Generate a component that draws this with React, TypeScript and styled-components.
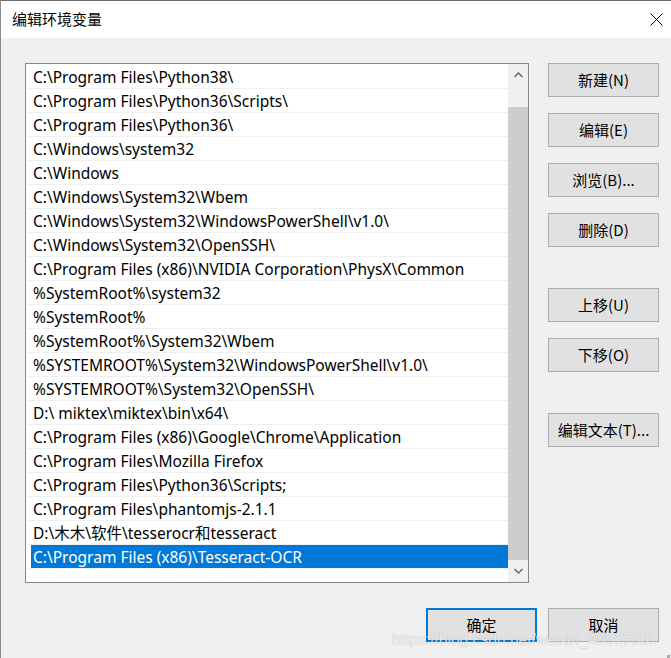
import styled, { createGlobalStyle } from "styled-components";

const GlobalStyle = createGlobalStyle`
  html, body {
    margin: 0;
    padding: 0;
    background: #f0f0f0;
  }
  * {
    box-sizing: border-box;
  }
`;

const paths = [
  "C:\\Program Files\\Python38\\",
  "C:\\Program Files\\Python36\\Scripts\\",
  "C:\\Program Files\\Python36\\",
  "C:\\Windows\\system32",
  "C:\\Windows",
  "C:\\Windows\\System32\\Wbem",
  "C:\\Windows\\System32\\WindowsPowerShell\\v1.0\\",
  "C:\\Windows\\System32\\OpenSSH\\",
  "C:\\Program Files (x86)\\NVIDIA Corporation\\PhysX\\Common",
  "%SystemRoot%\\system32",
  "%SystemRoot%",
  "%SystemRoot%\\System32\\Wbem",
  "%SYSTEMROOT%\\System32\\WindowsPowerShell\\v1.0\\",
  "%SYSTEMROOT%\\System32\\OpenSSH\\",
  "D:\\ miktex\\miktex\\bin\\x64\\",
  "C:\\Program Files (x86)\\Google\\Chrome\\Application",
  "C:\\Program Files\\Mozilla Firefox",
  "C:\\Program Files\\Python36\\Scripts;",
  "C:\\Program Files\\phantomjs-2.1.1",
  "D:\\木木\\软件\\tesserocr和tesseract",
  "C:\\Program Files (x86)\\Tesseract-OCR",
];

const buttonGroups = [
  ["新建(N)", "编辑(E)", "浏览(B)...", "删除(D)"],
  ["上移(U)", "下移(O)"],
  ["编辑文本(T)..."],
];

const Window = styled.div`
  position: relative;
  width: 671px;
  height: 658px;
  overflow: hidden;
  background: #f0f0f0;
  border-left: 1px solid #8a8a8a;
  font-family: "Noto Sans CJK SC", "Noto Sans", sans-serif;
  color: #000;
`;

const TitleBar = styled.div`
  height: 38px;
  background: #fff;
  border-top: 1px solid #6a6a6a;
  display: flex;
  align-items: center;
  justify-content: space-between;
  padding: 0 8px 0 11px;
`;

const Title = styled.span`
  font-size: 15px;
  line-height: 20px;
  margin-top: -1px;
`;

const CloseIcon = styled.svg`
  width: 13px;
  height: 13px;
  margin-bottom: 1px;
`;

const Body = styled.div`
  padding: 25px 12px 0 24px;
`;

const Main = styled.div`
  display: flex;
  gap: 19px;
`;

const ListBox = styled.div`
  width: 504px;
  height: 520px;
  border: 1px solid #828790;
  background: #fff;
  display: flex;
`;

const Rows = styled.div`
  flex: 1;
  padding-top: 1px;
  overflow: hidden;
`;

const Row = styled.div`
  height: 24px;
  margin-left: 1px;
  padding-left: 4px;
  border-bottom: 1px solid #f0f0f0;
  display: flex;
`;

const Label = styled.span<{ $selected?: boolean }>`
  flex: 1;
  padding: 1px 0 0 2px;
  font-family: "Noto Sans", "Noto Sans CJK SC", sans-serif;
  font-size: 15.5px;
  line-height: 22px;
  white-space: nowrap;
  background: ${(p) => (p.$selected ? "#0078d7" : "transparent")};
  color: ${(p) => (p.$selected ? "#fff" : "#000")};
`;

const ScrollBar = styled.div`
  width: 20px;
  background: #f0f0f0;
  display: flex;
  flex-direction: column;
`;

const ArrowBox = styled.div<{ $height: number }>`
  height: ${(p) => p.$height}px;
  flex: ${(p) => (p.$height ? "none" : "1")};
  display: flex;
  align-items: center;
  justify-content: center;
`;

const Thumb = styled.div`
  margin-top: 21px;
  height: 453px;
  background: #cdcdcd;
`;

const ButtonColumn = styled.div`
  width: 111px;
  display: flex;
  flex-direction: column;
  gap: 41px;
`;

const ButtonGroup = styled.div`
  display: flex;
  flex-direction: column;
  gap: 16px;
`;

const Button = styled.button<{ $primary?: boolean }>`
  width: 111px;
  height: 34px;
  padding: 0;
  background: #e1e1e1;
  border: ${(p) => (p.$primary ? "2px solid #0078d7" : "1px solid #adadad")};
  font-family: "Noto Sans CJK SC", "Noto Sans", sans-serif;
  font-size: 15px;
  line-height: 14px;
  color: #000;
`;

const Footer = styled.div`
  margin-top: 25px;
  display: flex;
  justify-content: flex-end;
  gap: 11px;
`;

const Watermark = styled.div`
  position: absolute;
  left: 391px;
  top: 633px;
  font-family: "Liberation Sans", Arial, sans-serif;
  font-size: 15.6px;
  line-height: 14px;
  color: rgba(255, 255, 255, 0.78);
  text-shadow: 0 0 1px rgba(0, 0, 0, 0.3);
  white-space: nowrap;
`;

const Grip = styled.div`
  position: absolute;
  right: 1px;
  bottom: 0;
  width: 3px;
  height: 3px;
  background: #a8a8a8;
`;

function Chevron({ up }: { up?: boolean }) {
  return (
    <svg width="9" height="6" viewBox="0 0 9 6">
      <polyline
        points={up ? "0.5,5 4.5,1 8.5,5" : "0.5,1 4.5,5 8.5,1"}
        fill="none"
        stroke="#606060"
        strokeWidth="1.3"
      />
    </svg>
  );
}

export default function App() {
  const selected = paths.length - 1;

  return (
    <>
      <GlobalStyle />
      <Window>
        <TitleBar>
          <Title>编辑环境变量</Title>
          <CloseIcon viewBox="0 0 13 13">
            <path d="M0.5 0.5 L12.5 12.5 M12.5 0.5 L0.5 12.5" stroke="#000" strokeWidth="1" />
          </CloseIcon>
        </TitleBar>
        <Body>
          <Main>
            <ListBox>
              <Rows>
                {paths.map((p, i) => (
                  <Row key={i}>
                    <Label $selected={i === selected}>{p}</Label>
                  </Row>
                ))}
              </Rows>
              <ScrollBar>
                <ArrowBox $height={22}>
                  <Chevron up />
                </ArrowBox>
                <Thumb />
                <ArrowBox $height={0}>
                  <Chevron />
                </ArrowBox>
              </ScrollBar>
            </ListBox>
            <ButtonColumn>
              {buttonGroups.map((group, g) => (
                <ButtonGroup key={g}>
                  {group.map((label) => (
                    <Button key={label}>{label}</Button>
                  ))}
                </ButtonGroup>
              ))}
            </ButtonColumn>
          </Main>
          <Footer>
            <Button $primary>确定</Button>
            <Button>取消</Button>
          </Footer>
        </Body>
        <Watermark>https://blog.csdn.net/weixin_40517301</Watermark>
        <Grip />
      </Window>
    </>
  );
}
